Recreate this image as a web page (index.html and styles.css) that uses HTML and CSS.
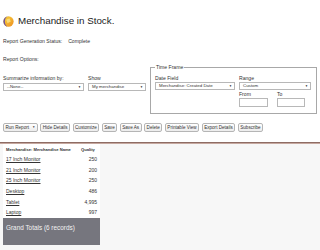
FILE: index.html
```html
<!DOCTYPE html>
<html>
<head>
<meta charset="utf-8">
<link rel="stylesheet" href="styles.css">
</head>
<body>
<div class="top">
  <div class="header">
    <svg class="logo" viewBox="0 0 12 12" width="11" height="11">
      <defs>
        <linearGradient id="g" x1="0" y1="0" x2="1" y2="1">
          <stop offset="0" stop-color="#f7d43c"/>
          <stop offset="1" stop-color="#ee8f22"/>
        </linearGradient>
      </defs>
      <circle cx="6" cy="6" r="5.6" fill="url(#g)"/>
      <path d="M6 0.4 A5.6 5.6 0 0 0 6 11.6 A4 5.6 0 0 1 6 0.4 Z" fill="#6b4f9e"/>
      <path d="M3.5 4 L7 2.5 L8.5 6 L5 8 Z" fill="#fbe38a" opacity="0.8"/>
    </svg>
    <h1 class="title">Merchandise in Stock.</h1>
  </div>
  <p class="status">Report Generation Status:<span class="status-value">Complete</span></p>
  <p class="options-label">Report Options:</p>
  <div class="options">
    <div class="field-group">
      <div class="field summarize">
        <label>Summarize information by:</label>
        <div class="select"><span>--None--</span><span class="arrow">▼</span></div>
      </div>
      <div class="field show">
        <label>Show</label>
        <div class="select"><span>My merchandise</span><span class="arrow">▼</span></div>
      </div>
    </div>
    <fieldset class="timeframe">
      <legend>Time Frame</legend>
      <div class="tf-row">
        <div class="field datefield">
          <label>Date Field</label>
          <div class="select"><span>Merchandise: Created Date</span><span class="arrow">▼</span></div>
        </div>
        <div class="field range">
          <label>Range</label>
          <div class="select"><span>Custom</span><span class="arrow">▼</span></div>
          <div class="dates">
            <div class="date from"><label>From</label><div class="input"></div></div>
            <div class="date to"><label>To</label><div class="input"></div></div>
          </div>
        </div>
      </div>
    </fieldset>
  </div>
  <div class="buttons">
    <button class="btn">Run Report <span class="caret">▼</span></button>
    <button class="btn">Hide Details</button>
    <button class="btn">Customize</button>
    <button class="btn">Save</button>
    <button class="btn">Save As</button>
    <button class="btn">Delete</button>
    <button class="btn">Printable View</button>
    <button class="btn">Export Details</button>
    <button class="btn">Subscribe</button>
  </div>
</div>
<div class="divider"></div>
<div class="results">
  <table class="report">
    <colgroup><col class="col-name"><col class="col-qty"></colgroup>
    <thead>
      <tr><th>Merchandise: Merchandise Name</th><th>Quality</th></tr>
    </thead>
    <tbody>
      <tr><td><a href="#">17 Inch Monitor</a></td><td class="num">250</td></tr>
      <tr><td><a href="#">21 Inch Monitor</a></td><td class="num">200</td></tr>
      <tr><td><a href="#">25 Inch Monitor</a></td><td class="num">250</td></tr>
      <tr><td><a href="#">Desktop</a></td><td class="num">486</td></tr>
      <tr><td><a href="#">Tablet</a></td><td class="num">4,995</td></tr>
      <tr><td><a href="#">Laptop</a></td><td class="num">997</td></tr>
      <tr class="total"><td colspan="2">Grand Totals (6 records)</td></tr>
    </tbody>
  </table>
</div>
</body>
</html>
```
FILE: styles.css
```css
* { box-sizing: border-box; }
html, body { margin: 0; padding: 0; }
body {
  width: 320px;
  height: 250px;
  overflow: hidden;
  background: #fff;
  color: #333;
  font-family: "Liberation Sans", Arial, sans-serif;
  font-size: 5.1px;
}
.top { padding-left: 3px; }
.header {
  display: flex;
  align-items: center;
  gap: 4px;
  padding-top: 14px;
  height: 28px;
}
.logo { display: block; flex: none; }
.title {
  margin: 0;
  font-size: 9.8px;
  font-weight: normal;
  line-height: 14px;
  color: #222;
}
.status { margin: 9px 0 0; line-height: 8px; }
.status-value { margin-left: 6px; }
.options-label { margin: 10px 0 0; line-height: 8px; }
.options { display: flex; align-items: flex-start; }
.field-group { display: flex; gap: 4px; padding-top: 11px; }
.field { display: flex; flex-direction: column; }
.field label { line-height: 8px; white-space: nowrap; }
.summarize { width: 81px; }
.summarize .select, .show .select { margin-top: 1px; }
.show { width: 58px; }
.select {
  display: flex;
  justify-content: space-between;
  align-items: center;
  height: 8px;
  border: 1px solid #b8b8b8;
  background: #fff;
  padding: 0 2px 0 3px;
  font-size: 4.4px;
  line-height: 6px;
  color: #333;
  white-space: nowrap;
}
.arrow { font-size: 3px; color: #222; }
.timeframe {
  margin: 0 0 0 4px;
  padding: 3px 5px 6px 4px;
  width: 167px;
  border: 1px solid #a8a8a8;
  min-width: 0;
}
.timeframe legend { padding: 0 1px; line-height: 8px; margin-left: 0; }
.tf-row { display: flex; gap: 4px; }
.datefield { width: 80px; }
.range { width: 72px; }
.dates { display: flex; gap: 9px; }
.date { display: flex; flex-direction: column; }
.from { width: 29px; }
.to { width: 28px; }
.input {
  height: 9px;
  border: 1px solid #b8b8b8;
  background: #fff;
}
.buttons { display: flex; gap: 2.5px; margin-top: 9px; }
.btn {
  height: 9px;
  margin: 0;
  padding: 0 1.5px;
  border: 1px solid #b5b5b5;
  border-radius: 2px;
  background: linear-gradient(#ffffff, #ececec);
  font-family: inherit;
  font-size: 4.6px;
  line-height: 7px;
  color: #333;
  white-space: nowrap;
}
.caret { font-size: 3px; margin-left: 2px; vertical-align: middle; }
.divider {
  margin-top: 10px;
  height: 2px;
  border-top: 1px solid #8e6c64;
  background: #c6a89f;
}
.results {
  background: #f7f7f7;
  height: 106px;
  padding-left: 3px;
}
.report {
  width: 97px;
  table-layout: fixed;
  border-collapse: collapse;
  background: #fff;
  font-size: 5px;
}
.col-name { width: 75px; }
.col-qty { width: 22px; }
.report th {
  height: 10px;
  padding: 0 0 0 3px;
  text-align: left;
  font-size: 4.1px;
  font-weight: bold;
  color: #333;
  white-space: nowrap;
}
.report td {
  height: 10.7px;
  padding: 0 0 0 3px;
  line-height: 7px;
  white-space: nowrap;
}
.report a { color: #333; text-decoration: underline; }
.report td.num { text-align: right; padding: 0 3px 0 0; }
.report tr.total td {
  height: 27px;
  vertical-align: top;
  padding: 5px 0 0 3px;
  background: #76767e;
  color: #f2f2f2;
  font-size: 6.4px;
  line-height: 9px;
}
```
